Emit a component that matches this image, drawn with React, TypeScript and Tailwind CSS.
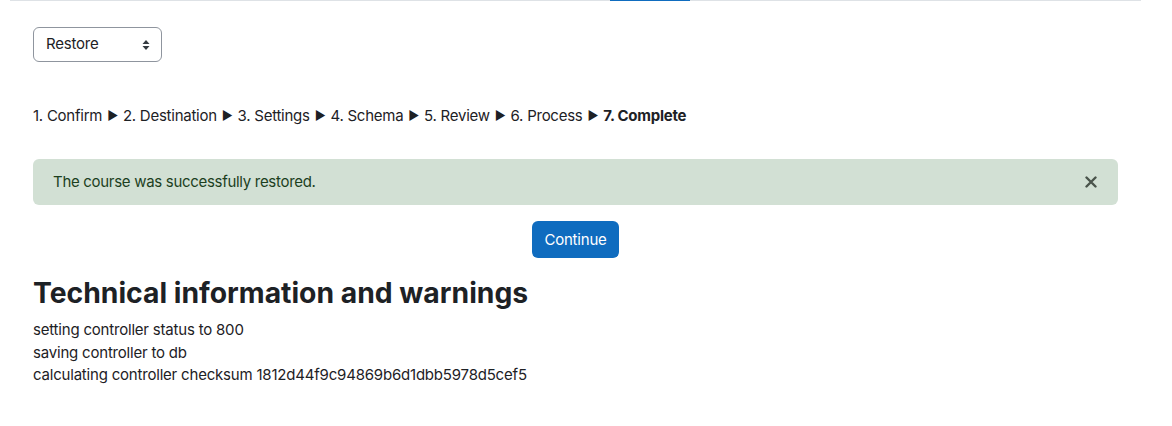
import React from "react";

export default function App() {
  const steps = ["1. Confirm", "2. Destination", "3. Settings", "4. Schema", "5. Review", "6. Process"];
  return (
    <div className="w-[1172px] h-[426px] bg-white text-[#1d2125] overflow-hidden" style={{ fontFamily: "Inter, 'Noto Sans', sans-serif" }}>
      <div className="mx-[10px] w-[1131px] h-px bg-[#dee2e6] flex">
        <div className="ml-[600px] w-[80px] h-px bg-[#0f6cbf]" />
      </div>
      <div className="px-[33px] pt-[26px] w-[1151px]">
        <div className="w-[129px] h-[35px] border border-[#8f959e] rounded-[6px] flex items-center justify-between pl-[12px] pr-[11px] text-[15px] tracking-[-0.2px] text-[#1d2125]">
          <span>Restore</span>
          <svg width="8" height="12" viewBox="0 0 8 12">
            <path d="M4 1 L7.5 5 L0.5 5 Z" fill="#343a40" />
            <path d="M4 11 L7.5 7 L0.5 7 Z" fill="#343a40" />
          </svg>
        </div>
        <div className="mt-[43px] text-[15px] leading-[22px] flex items-center tracking-[-0.25px]">
          {steps.map((s) => (
            <React.Fragment key={s}>
              <span>{s}</span>
              <span className="mx-[5px] text-[12px]">▶</span>
            </React.Fragment>
          ))}
          <span className="font-bold">7. Complete</span>
        </div>
        <div className="mt-[32px] h-[46px] rounded-[6px] bg-[#d2e0d4] text-[#1c3f1e] text-[15px] tracking-[-0.3px] flex items-center justify-between pl-[20px] pr-[21px]">
          <span>The course was successfully restored.</span>
          <svg width="12" height="12" viewBox="0 0 12 12">
            <path d="M1.5 1.5 L10.5 10.5 M10.5 1.5 L1.5 10.5" stroke="#4a544b" strokeWidth="2.4" strokeLinecap="round" />
          </svg>
        </div>
        <div className="flex justify-center mt-[16px]">
          <button className="h-[37px] px-[12px] pt-px rounded-[6px] bg-[#0f6cbf] text-white text-[15px] tracking-[-0.2px]">Continue</button>
        </div>
        <h2 className="mt-[17px] text-[28.3px] leading-[36px] font-bold">Technical information and warnings</h2>
        <div className="mt-[8px] text-[15px] leading-[22.5px] tracking-[-0.2px]">
          <div>setting controller status to 800</div>
          <div>saving controller to db</div>
          <div>calculating controller checksum 1812d44f9c94869b6d1dbb5978d5cef5</div>
        </div>
      </div>
    </div>
  );
}
